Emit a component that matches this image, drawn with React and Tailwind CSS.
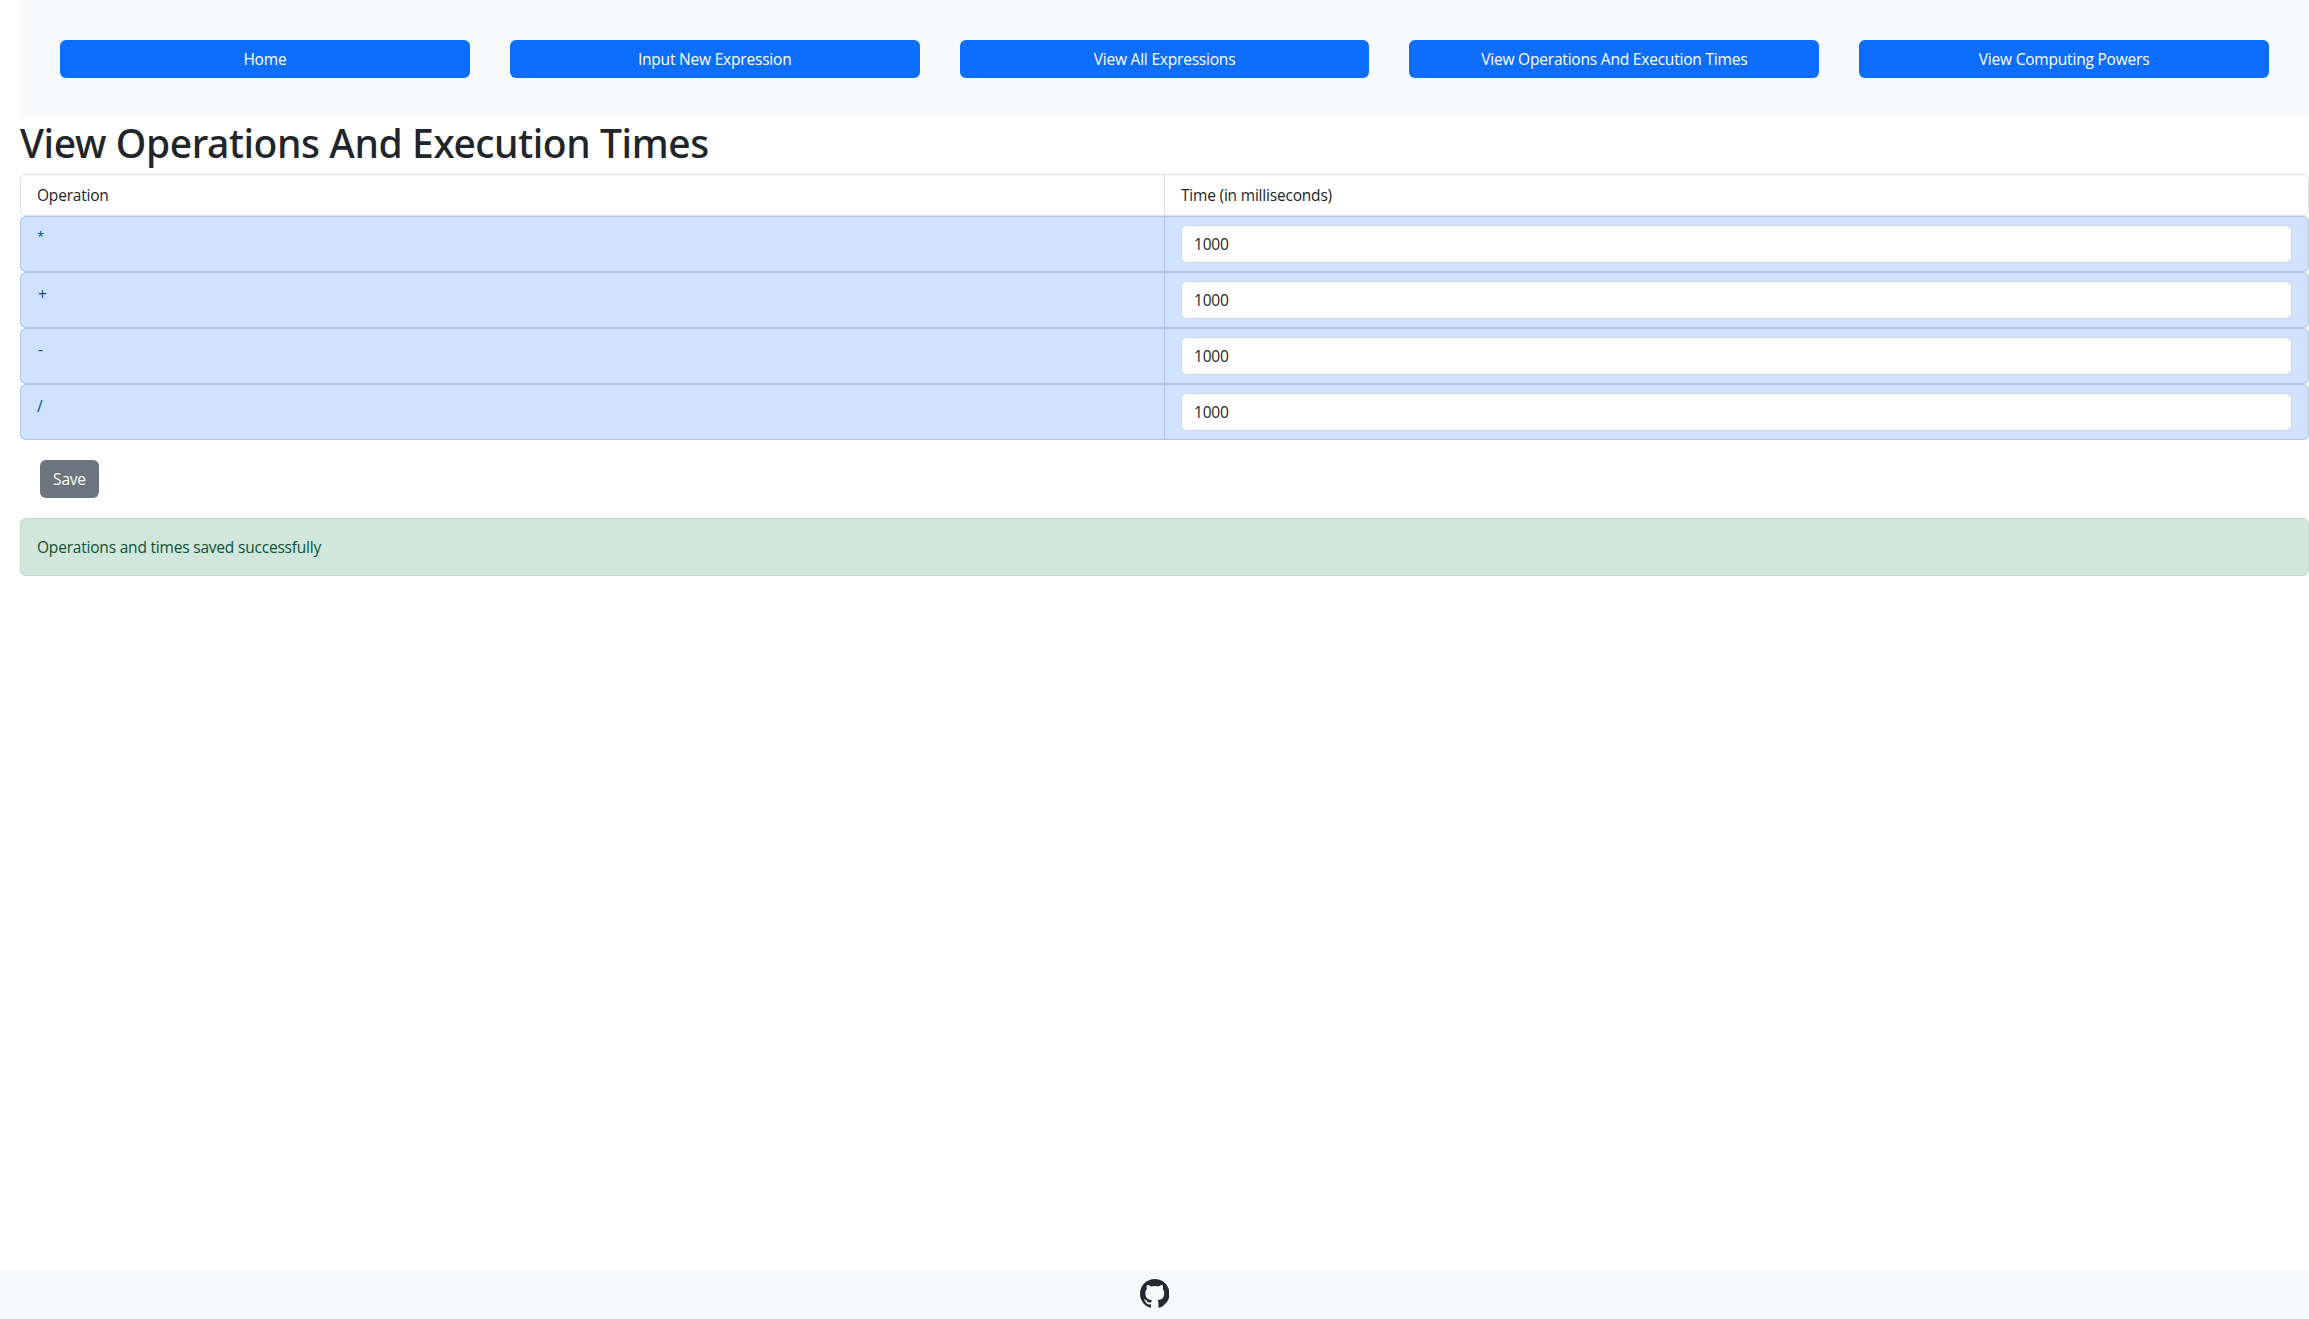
import { BsGithub } from "react-icons/bs";

const links = [
  "Home",
  "Input New Expression",
  "View All Expressions",
  "View Operations And Execution Times",
  "View Computing Powers",
];

const operations = [
  { sign: "*", time: "1000", signClass: "text-[13px] leading-[22px]" },
  { sign: "+", time: "1000", signClass: "pt-px pl-px" },
  { sign: "-", time: "1000", signClass: "pl-px" },
  { sign: "/", time: "1000", signClass: "pt-px" },
];

function NavBar() {
  return (
    <nav className="grid grid-cols-5 bg-[#f8f9fa] p-5">
      {links.map((label) => (
        <button
          key={label}
          className="m-5 h-[38px] rounded-md bg-[#0d6efd] px-3 text-center leading-6 text-white"
        >
          {label}
        </button>
      ))}
    </nav>
  );
}

function HeaderRow() {
  return (
    <div className="flex h-[42px] rounded-md border border-black/[.125] leading-6">
      <div className="flex-1 px-4 py-2">Operation</div>
      <div className="flex-1 border-l border-black/[.125] px-4 py-2">
        Time (in milliseconds)
      </div>
    </div>
  );
}

function OperationRow({ sign, time, signClass }) {
  return (
    <div className="flex h-14 rounded-md border border-black/[.125] bg-[#cfe2ff] leading-6 text-[#084298]">
      <div className="flex-1 px-4 py-2">
        <div className={signClass}>{sign}</div>
      </div>
      <div className="flex-1 border-l border-black/[.125] px-4 py-2">
        <input
          className="block h-[38px] w-full rounded-md border border-[#ced4da] bg-white px-3 leading-6 text-[#212529]"
          defaultValue={time}
        />
      </div>
    </div>
  );
}

export default function App() {
  return (
    <div className="flex h-screen flex-col overflow-hidden bg-white font-['Open_Sans',sans-serif] text-[15.5px] tracking-[-0.2px] text-[#212529]">
      <main className="flex-1 pl-5">
        <NavBar />
        <h1 className="mb-[7px] pt-px font-['Noto_Sans',sans-serif] text-[39px] leading-[48px] font-medium tracking-[-0.4px]">
          View Operations And Execution Times
        </h1>
        <HeaderRow />
        {operations.map((op) => (
          <OperationRow key={op.sign} {...op} />
        ))}
        <button className="m-5 block h-[38px] w-[59px] rounded-md bg-[#6c757d] leading-6 text-white">
          Save
        </button>
        <div className="h-[58px] rounded-md border border-[#badbcc] bg-[#d1e7dd] p-4 leading-6 text-[#0f5132]">
          Operations and times saved successfully
        </div>
      </main>
      <footer className="flex h-[50px] items-center justify-center bg-[#f8f9fa]">
        <BsGithub className="size-[29.5px] text-[#24292f]" />
      </footer>
    </div>
  );
}
